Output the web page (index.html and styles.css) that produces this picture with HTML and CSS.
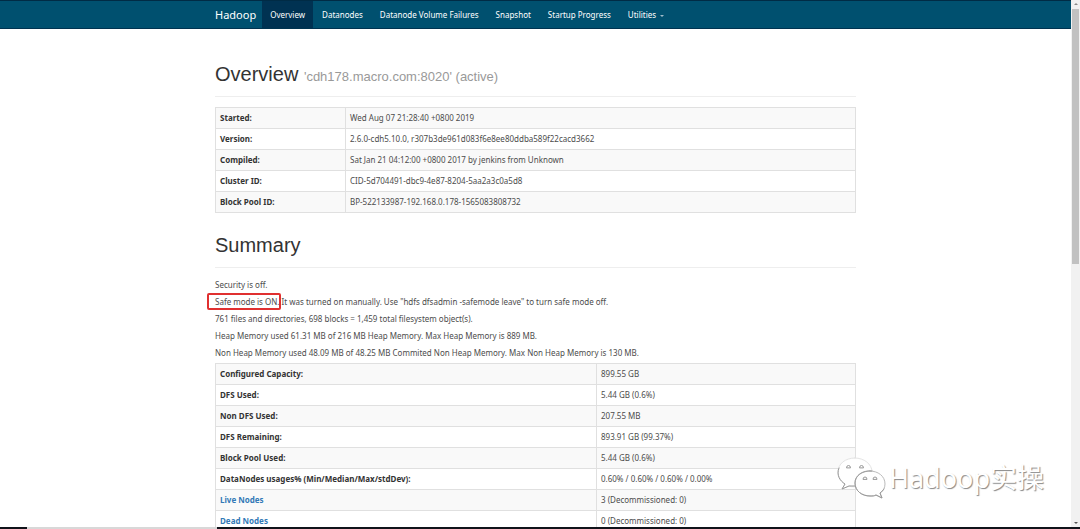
FILE: index.html
```html
<!DOCTYPE html>
<html lang="en">
<head>
<meta charset="utf-8">
<title>Namenode information</title>
<link rel="stylesheet" href="styles.css">
</head>
<body>
<div class="window">
  <div class="page">
    <header class="navbar">
      <nav class="container nav">
        <a class="brand" href="#">Hadoop</a>
        <a class="nav-link active" href="#overview">Overview</a>
        <a class="nav-link" href="#datanodes">Datanodes</a>
        <a class="nav-link" href="#failures">Datanode Volume Failures</a>
        <a class="nav-link" href="#snapshot">Snapshot</a>
        <a class="nav-link" href="#startup">Startup Progress</a>
        <a class="nav-link" href="#utilities">Utilities <span class="caret"></span></a>
      </nav>
    </header>
    <main class="container">
      <h1 class="heading">Overview <small>'cdh178.macro.com:8020' (active)</small></h1>
      <table class="table info">
        <tr><th scope="row">Started:</th><td>Wed Aug 07 21:28:40 +0800 2019</td></tr>
        <tr><th scope="row">Version:</th><td>2.6.0-cdh5.10.0, r307b3de961d083f6e8ee80ddba589f22cacd3662</td></tr>
        <tr><th scope="row">Compiled:</th><td>Sat Jan 21 04:12:00 +0800 2017 by jenkins from Unknown</td></tr>
        <tr><th scope="row">Cluster ID:</th><td>CID-5d704491-dbc9-4e87-8204-5aa2a3c0a5d8</td></tr>
        <tr><th scope="row">Block Pool ID:</th><td>BP-522133987-192.168.0.178-1565083808732</td></tr>
      </table>
      <h1 class="heading">Summary</h1>
      <p>Security is off.</p>
      <p><span class="marked">Safe mode is ON.</span> It was turned on manually. Use "hdfs dfsadmin -safemode leave" to turn safe mode off.</p>
      <p>761 files and directories, 698 blocks = 1,459 total filesystem object(s).</p>
      <p>Heap Memory used 61.31 MB of 216 MB Heap Memory. Max Heap Memory is 889 MB.</p>
      <p>Non Heap Memory used 48.09 MB of 48.25 MB Commited Non Heap Memory. Max Non Heap Memory is 130 MB.</p>
      <table class="table summary">
        <tr><th scope="row">Configured Capacity:</th><td>899.55 GB</td></tr>
        <tr><th scope="row">DFS Used:</th><td>5.44 GB (0.6%)</td></tr>
        <tr><th scope="row">Non DFS Used:</th><td>207.55 MB</td></tr>
        <tr><th scope="row">DFS Remaining:</th><td>893.91 GB (99.37%)</td></tr>
        <tr><th scope="row">Block Pool Used:</th><td>5.44 GB (0.6%)</td></tr>
        <tr><th scope="row">DataNodes usages% (Min/Median/Max/stdDev):</th><td>0.60% / 0.60% / 0.60% / 0.00%</td></tr>
        <tr><th scope="row"><a href="#live">Live Nodes</a></th><td>3 (Decommissioned: 0)</td></tr>
        <tr><th scope="row"><a href="#dead">Dead Nodes</a></th><td>0 (Decommissioned: 0)</td></tr>
      </table>
    </main>
  </div>
  <div class="scrollbar" aria-hidden="true">
    <span class="arrow up"></span>
    <span class="thumb"></span>
    <span class="arrow down"></span>
  </div>
  <div class="taskbar"><span class="taskbar-item"></span></div>
  <div class="watermark">
    <svg class="wechat" viewBox="0 0 50 44" fill="none" stroke="#999" stroke-linecap="round" stroke-linejoin="round">
      <path d="M19 2C9 2 2 8 2 16c0 5 3 9 7 12l-3 5 7-3c3 1 7 1 10 0 8-2 13-7 13-14C36 8 28 2 19 2Z" fill="#fff" stroke="#e4e4e4"/>
      <path d="M3 12c-3 7 1 13 6 16l-3 5 7-3h7"/>
      <path d="M10.500 11.500a2 2 0 1 1 4 0zM23.500 11.500a2 2 0 1 1 4 0z"/>
      <path d="M34 15c-8 0-15 5-15 12 0 8 7 13 15 13 3 0 4 0 6-1l6 3-2-5c3-2 5-5 5-9 0-8-7-13-15-13Z" fill="#fff" stroke="#bbb"/>
      <path d="M36 15c-9-1-17 4-17 12 0 8 7 13 15 13 3 0 4 0 6-1l6 3-2-5c2-1 3-3 4-4"/>
      <path d="M27 23a2 2 0 1 1 4 0zM37 23a2 2 0 1 1 4 0z"/>
    </svg>
    <span>Hadoop实操</span>
  </div>
</div>
</body>
</html>
```
FILE: styles.css
```css
* { box-sizing: border-box; }
body {
  margin: 0;
  background: #fff;
  color: #4c4c4c;
  font: 8px/13px "Noto Sans", "Open Sans", sans-serif;
}
a { color: #337ab7; text-decoration: none; }
.window {
  position: relative;
  display: grid;
  grid-template-columns: 1fr 9px;
  grid-template-rows: 1fr 2px;
  height: 100vh;
  overflow: hidden;
}
.page { min-height: 0; overflow: hidden; }
.container { max-width: 641px; margin: 0 auto; }
.navbar {
  background: #00506f;
  border-top: 1px solid #002b45;
  border-bottom: 1px solid #003350;
}
.nav { display: flex; align-items: stretch; gap: 1px; height: 27px; }
.brand { padding-right: 5px; color: #fff; font-size: 11px; line-height: 27px; }
.nav-link { padding: 0 8px; color: #fff; line-height: 27px; white-space: nowrap; }
.nav-link.active { background: #003252; }
.caret {
  display: inline-block;
  margin-left: 2px;
  border: 2px solid transparent;
  border-top-color: #9fbccb;
  border-bottom: 0;
  vertical-align: middle;
}
.heading {
  margin: 0 0 10px;
  padding: 33px 0 10px;
  border-bottom: 1px solid #eee;
  color: #333;
  font: 20px/24px "Liberation Sans", Arial, sans-serif;
}
.heading small { color: #999; font-size: 13px; line-height: 1; }
.table + .heading { padding-top: 20px; }
p { margin: 0 0 4px; }
.table {
  width: 100%;
  border-collapse: collapse;
  table-layout: fixed;
}
.table th, .table td {
  height: 21px;
  padding: 0 4px 1px;
  border: 1px solid #e0e0e0;
  text-align: left;
}
.table th { color: #333; }
.table tr:nth-child(odd) { background: #f9f9f9; }
.info th { width: 130px; }
.summary th { width: 381px; }
.marked { position: relative; }
.marked::after {
  content: "";
  position: absolute;
  inset: -3px -1px -3px -8px;
  border: 2px solid #e03030;
  border-radius: 2px;
}
.scrollbar {
  display: flex;
  flex-direction: column;
  align-items: center;
  padding: 3px 0;
  background: #f1f1f1;
}
.thumb { width: 7px; height: 49%; margin-top: 4px; background: #c1c1c1; }
.arrow { border: 2px solid transparent; }
.up { border-top: 0; border-bottom-color: #888; }
.down { margin-top: auto; border-bottom: 0; border-top-color: #555; }
.taskbar { grid-column: 1 / -1; display: flex; padding-left: 27px; background: #10131a; }
.taskbar-item { width: 18%; background: #d8d8d8; }
.watermark {
  position: absolute;
  right: 36px;
  bottom: 29px;
  display: flex;
  align-items: center;
  gap: 3px;
  color: #fff;
  font: 27px/44px "Noto Sans", "Noto Sans CJK SC", sans-serif;
  text-shadow: 1px 1px 1px #888;
}
.wechat { width: 50px; height: 44px; }
```
